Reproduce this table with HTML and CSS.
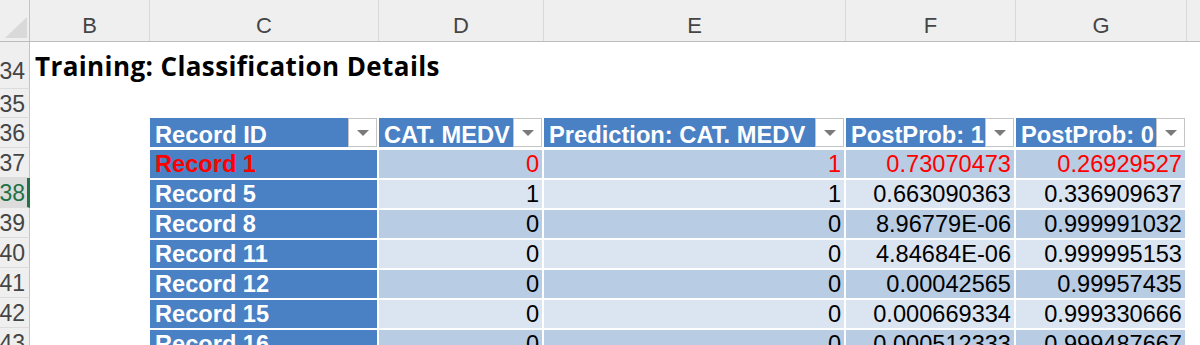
FILE: index.html
```html
<!DOCTYPE html>
<html>
<head>
<meta charset="utf-8">
<link rel="stylesheet" href="styles.css">
</head>
<body>
<div class="sheet">
  <div class="grid colhdr">
    <div class="corner"><svg width="30" height="41" viewBox="0 0 30 41"><polygon points="27,17 27,38 5,38" fill="#d9d9d9"/></svg></div>
    <div class="ch">B</div>
    <div class="ch">C</div>
    <div class="ch">D</div>
    <div class="ch">E</div>
    <div class="ch">F</div>
    <div class="ch">G</div>
    <div class="ch last"></div>
  </div>

  <div class="grid row row-title">
    <div class="rh">34</div>
    <div class="title">Training: Classification Details</div>
  </div>
  <div class="grid row row-35">
    <div class="rh">35</div>
  </div>

  <div class="grid row trow">
    <div class="rh">36</div>
    <div class="blank"></div>
    <div class="th"><span class="lbl">Record ID</span><span class="dd"><svg width="12" height="6" viewBox="0 0 12 6"><polygon points="0,0 12,0 6,6" fill="#7a7a7a"/></svg></span></div>
    <div class="th"><span class="lbl">CAT. MEDV</span><span class="dd"><svg width="12" height="6" viewBox="0 0 12 6"><polygon points="0,0 12,0 6,6" fill="#7a7a7a"/></svg></span></div>
    <div class="th"><span class="lbl">Prediction: CAT. MEDV</span><span class="dd"><svg width="12" height="6" viewBox="0 0 12 6"><polygon points="0,0 12,0 6,6" fill="#7a7a7a"/></svg></span></div>
    <div class="th"><span class="lbl">PostProb: 1</span><span class="dd"><svg width="12" height="6" viewBox="0 0 12 6"><polygon points="0,0 12,0 6,6" fill="#7a7a7a"/></svg></span></div>
    <div class="th"><span class="lbl">PostProb: 0</span><span class="dd"><svg width="12" height="6" viewBox="0 0 12 6"><polygon points="0,0 12,0 6,6" fill="#7a7a7a"/></svg></span></div>
  </div>

  <div class="grid row trow odd red">
    <div class="rh">37</div>
    <div class="blank"></div>
    <div class="td rid">Record 1</div>
    <div class="td">0</div>
    <div class="td">1</div>
    <div class="td">0.73070473</div>
    <div class="td">0.26929527</div>
  </div>
  <div class="grid row trow even">
    <div class="rh sel">38</div>
    <div class="blank"></div>
    <div class="td rid">Record 5</div>
    <div class="td">1</div>
    <div class="td">1</div>
    <div class="td">0.663090363</div>
    <div class="td">0.336909637</div>
  </div>
  <div class="grid row trow odd">
    <div class="rh">39</div>
    <div class="blank"></div>
    <div class="td rid">Record 8</div>
    <div class="td">0</div>
    <div class="td">0</div>
    <div class="td">8.96779E-06</div>
    <div class="td">0.999991032</div>
  </div>
  <div class="grid row trow even">
    <div class="rh">40</div>
    <div class="blank"></div>
    <div class="td rid">Record 11</div>
    <div class="td">0</div>
    <div class="td">0</div>
    <div class="td">4.84684E-06</div>
    <div class="td">0.999995153</div>
  </div>
  <div class="grid row trow odd">
    <div class="rh">41</div>
    <div class="blank"></div>
    <div class="td rid">Record 12</div>
    <div class="td">0</div>
    <div class="td">0</div>
    <div class="td">0.00042565</div>
    <div class="td">0.99957435</div>
  </div>
  <div class="grid row trow even">
    <div class="rh">42</div>
    <div class="blank"></div>
    <div class="td rid">Record 15</div>
    <div class="td">0</div>
    <div class="td">0</div>
    <div class="td">0.000669334</div>
    <div class="td">0.999330666</div>
  </div>
  <div class="grid row trow odd">
    <div class="rh">43</div>
    <div class="blank"></div>
    <div class="td rid">Record 16</div>
    <div class="td">0</div>
    <div class="td">0</div>
    <div class="td">0.000512333</div>
    <div class="td">0.999487667</div>
  </div>
</div>
</body>
</html>
```

FILE: styles.css
```css
html, body {
  margin: 0;
  padding: 0;
  background: #ffffff;
}
body {
  width: 1200px;
  height: 345px;
  overflow: hidden;
  font-family: "Liberation Sans", Arial, sans-serif;
}
.sheet {
  width: 1200px;
}
.grid {
  display: grid;
  grid-template-columns: 30px 120px 229px 165px 302px 170px 171px 1fr;
}
.colhdr {
  height: 42px;
  box-sizing: border-box;
  background: #efefef;
  border-bottom: 1px solid #bcbcbc;
}
.corner {
  border-right: 1px solid #c4c4c4;
  box-sizing: border-box;
  overflow: hidden;
}
.corner svg {
  display: block;
}
.ch {
  display: flex;
  align-items: flex-end;
  justify-content: center;
  border-right: 1px solid #d9d9d9;
  font-size: 22px;
  line-height: 24px;
  padding-bottom: 3px;
  color: #454545;
}
.ch.last {
  border-right: none;
}
.row {
  height: 30px;
}
.row-title {
  height: 47px;
}
.row-35 {
  height: 29px;
}
.rh {
  box-sizing: border-box;
  background: #efefef;
  border-right: 1px solid #c4c4c4;
  border-bottom: 1px solid #dcdcdc;
  display: flex;
  align-items: center;
  justify-content: flex-end;
  padding-right: 4px;
  padding-top: 2px;
  font-size: 23px;
  color: #444444;
  overflow: hidden;
  white-space: nowrap;
}
.row-title .rh {
  padding-top: 12px;
}
.rh.sel {
  background: #dcdcdc;
  color: #1e7145;
  border-right: 3px solid #217346;
  padding-right: 2px;
}
.title {
  grid-column: 2 / -1;
  display: flex;
  align-items: flex-end;
  padding-left: 5px;
  padding-bottom: 8px;
  font-family: "Open Sans", "Liberation Sans", sans-serif;
  font-weight: 700;
  font-size: 26px;
  letter-spacing: 0.4px;
  line-height: 30px;
  color: #000000;
  white-space: nowrap;
}
.th {
  box-sizing: border-box;
  display: flex;
  align-items: flex-end;
  background: #4a80c4;
  color: #ffffff;
  font-weight: 700;
  font-size: 23.7px;
  padding-left: 5px;
  border-right: 2px solid #ffffff;
  border-bottom: 1px solid #ffffff;
  min-width: 0;
}
.th .lbl {
  flex: 1;
  min-width: 0;
  overflow: hidden;
  white-space: nowrap;
  line-height: 24px;
}
.th .dd {
  flex: none;
  align-self: stretch;
  width: 29px;
  box-sizing: border-box;
  background: #ffffff;
  border: 1px solid #c4c4c4;
  display: flex;
  align-items: center;
  justify-content: center;
}
.th .dd svg {
  display: block;
}
.td {
  box-sizing: border-box;
  display: flex;
  align-items: flex-end;
  justify-content: flex-end;
  padding-right: 3px;
  border-right: 2px solid #ffffff;
  border-top: 2px solid #ffffff;
  font-size: 23.6px;
  color: #000000;
  white-space: nowrap;
  overflow: hidden;
}
.odd .td {
  background: #b8cce4;
}
.even .td {
  background: #dbe5f1;
}
.td.rid {
  background: #4a80c4;
  color: #ffffff;
  font-weight: 700;
  justify-content: flex-start;
  padding-left: 5px;
  padding-right: 0;
}
.red .td {
  color: #ff0000;
}
.red .td.rid {
  color: #ff0000;
}
```
